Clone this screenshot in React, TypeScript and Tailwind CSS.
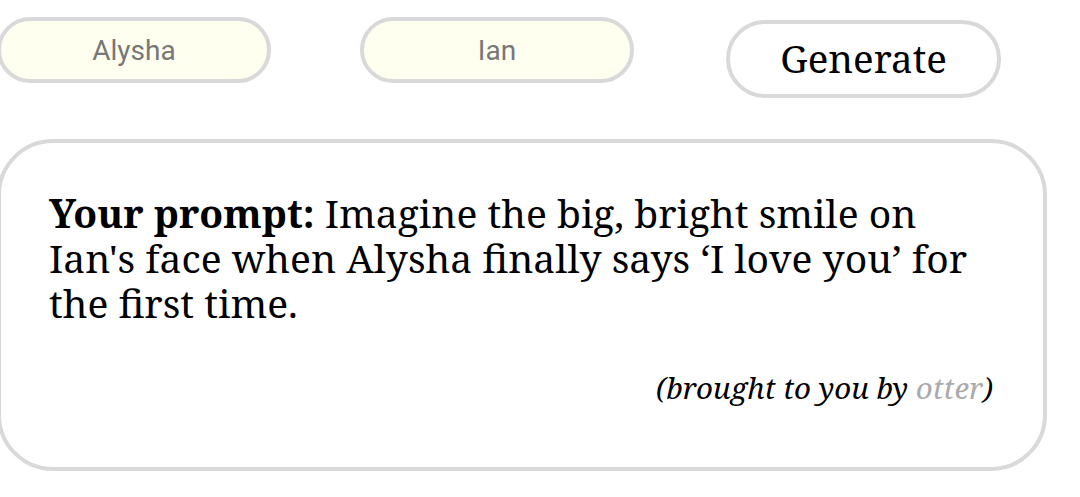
import { useState } from "react";

const serif = "font-['Noto_Serif','DejaVu_Serif',serif]";

function NameInput({ value, onChange }: { value: string; onChange: (v: string) => void }) {
  return (
    <input
      value={value}
      onChange={(e) => onChange(e.target.value)}
      className="h-[66px] w-[274px] rounded-full border-4 border-[#d9d9d9] bg-[#fffff0] text-center text-[28px] text-[#777] outline-none font-['Roboto',sans-serif]"
    />
  );
}

export default function App() {
  const [first, setFirst] = useState("Alysha");
  const [second, setSecond] = useState("Ian");

  return (
    <div className="min-h-screen w-[1080px] overflow-hidden bg-white">
      <div className="flex items-start pt-[17px] ml-[-3px]">
        <NameInput value={first} onChange={setFirst} />
        <div className="ml-[89px]">
          <NameInput value={second} onChange={setSecond} />
        </div>
        <button
          className={`ml-[92px] mt-[3px] h-[78px] w-[275px] rounded-full border-4 border-[#d9d9d9] bg-white text-[38.5px] text-black ${serif}`}
        >
          Generate
        </button>
      </div>

      <div
        className={`ml-[-3px] mt-[41px] h-[332px] w-[1050px] rounded-[56px] border-4 border-[#d9d9d9] bg-white pl-[48px] pr-[50px] pt-[47px] ${serif}`}
      >
        <p className="w-[940px] text-[39px] leading-[45px] text-black">
          <span className="font-bold">Your prompt:</span> Imagine the big, bright smile on {second}'s face when{" "}
          {first} finally says ‘I love you’ for the first time.
        </p>
        <p className="mt-[41px] text-right text-[29.5px] italic text-black">
          (brought to you by <span className="text-[#aaa]">otter</span>)
        </p>
      </div>
    </div>
  );
}
